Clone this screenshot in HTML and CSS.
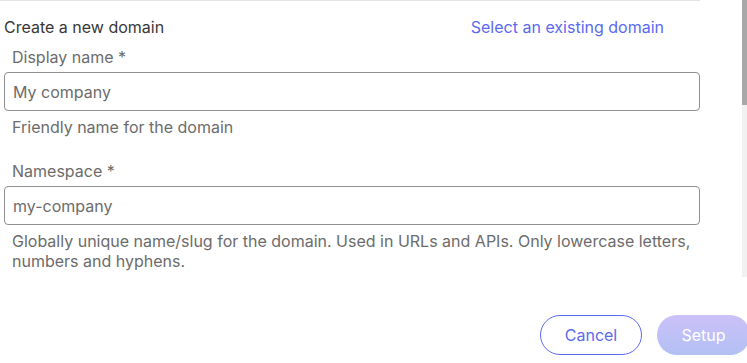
FILE: index.html
```html
<!DOCTYPE html>
<html lang="en">
<head>
  <meta charset="UTF-8" />
  <meta name="viewport" content="width=device-width, initial-scale=1.0" />
  <title>Create domain</title>
  <link rel="stylesheet" href="styles.css">
</head>
<body>
  <div class="dialog-body">
    <div class="scroll-area">
      <div class="form">
        <div class="form-header">
          <span class="form-title">Create a new domain</span>
          <a class="switch-link" href="#">Select an existing domain</a>
        </div>

        <div class="field">
          <label for="displayName">Display name *</label>
          <input type="text" id="displayName" value="My company">
          <p class="hint">Friendly name for the domain</p>
        </div>

        <div class="field">
          <label for="namespace">Namespace *</label>
          <input type="text" id="namespace" value="my-company">
          <p class="hint">Globally unique name/slug for the domain. Used in URLs and APIs. Only lowercase letters, numbers and hyphens.</p>
        </div>
      </div>
    </div>
    <div class="scrollbar">
      <div class="scrollbar-thumb"></div>
    </div>
  </div>

  <div class="dialog-actions">
    <button class="btn btn-outline">Cancel</button>
    <button class="btn btn-primary" disabled>Setup</button>
  </div>
</body>
</html>
```

FILE: styles.css
```css
* {
  box-sizing: border-box;
}
body {
  margin: 0;
  font-family: Inter, 'Noto Sans', sans-serif;
  font-size: 16px;
  color: #333;
  background: #fff;
  overflow: hidden;
}
.dialog-body {
  display: flex;
  height: 277px;
}
.scroll-area {
  flex: 1;
}
.scrollbar {
  width: 5px;
  background: #f1f1f1;
}
.scrollbar-thumb {
  height: 105px;
  background: #a8a8a8;
}
.form {
  width: 700px;
  border-top: 1px solid #e3e3e3;
  padding: 16px 0 0 4px;
}
.form-header {
  display: flex;
  justify-content: space-between;
  line-height: 20px;
  padding-right: 36px;
  margin-bottom: 10px;
}
.form-title {
  color: #383838;
}
.switch-link {
  color: #5b6af0;
  text-decoration: none;
}
.field {
  margin-bottom: 24px;
}
.field label {
  display: block;
  padding-left: 8px;
  line-height: 20px;
  color: #6c6c6c;
  margin-bottom: 5px;
}
.field input {
  display: block;
  width: 100%;
  height: 39px;
  padding: 0 8px;
  font-family: inherit;
  font-size: 16px;
  color: #6c6c6c;
  border: 1px solid #909090;
  border-radius: 4px;
  outline: none;
}
.hint {
  margin: 6px 0 0;
  padding-left: 8px;
  line-height: 20px;
  color: #6c6c6c;
}
.dialog-actions {
  display: flex;
  justify-content: flex-end;
  gap: 15px;
  margin-top: 38px;
  margin-right: -3px;
}
.btn {
  height: 40px;
  border-radius: 20px;
  font-family: inherit;
  font-size: 16px;
  cursor: pointer;
}
.btn-outline {
  width: 102px;
  background: #fff;
  color: #5b6af0;
  border: 1px solid #5b6af0;
}
.btn-primary {
  width: 93px;
  border: none;
  color: #fff;
  background: linear-gradient(to bottom, #cbc1f8, #b2c0f4);
}
```
